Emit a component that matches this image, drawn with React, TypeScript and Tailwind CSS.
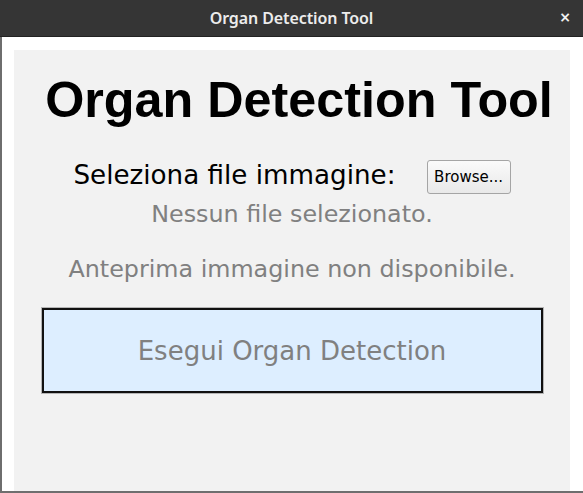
import React from "react";

export default function App() {
  return (
    <div className="w-[583px] h-[493px] bg-white flex flex-col overflow-hidden relative">
      <div className="h-[37px] bg-[#353535] border-b border-[#222] flex items-center justify-center relative shrink-0">
        <span className="text-[#ececec] text-[16px] font-semibold tracking-[-0.1px] -mt-[1px]" style={{ fontFamily: '"Noto Sans", sans-serif' }}>
          Organ Detection Tool
        </span>
        <span className="absolute right-[12px] top-[10px] text-[#f0f0f0] text-[14px] font-bold leading-none" style={{ fontFamily: '"DejaVu Sans", sans-serif' }}>
          ×
        </span>
      </div>
      <div className="flex-1 flex border-l-2 border-b-2 border-l-[#6e6e6e] border-b-[#6e6e6e] pl-[12px] pr-[13px] pt-[13px]">
        <div className="flex-1 bg-[#f2f2f2] flex flex-col items-center" style={{ fontFamily: '"DejaVu Sans", sans-serif' }}>
          <h1 className="mt-[22px] pl-[14px] text-[50.3px] leading-[56px] font-bold text-black" style={{ fontFamily: '"Liberation Sans", Arial, sans-serif' }}>
            Organ Detection Tool
          </h1>
          <div className="mt-[32px] flex items-start gap-[31px]">
            <span className="text-[26.2px] leading-[30px] text-black">Seleziona file immagine:</span>
            <button className="h-[34px] w-[84px] border border-[#a5a5a5] rounded-[3px] bg-gradient-to-b from-[#fafafa] to-[#e9e9e9] text-[15px] text-black">
              Browse...
            </button>
          </div>
          <div className="mt-[6px] text-[23.8px] leading-[28px] text-[#808080]">Nessun file selezionato.</div>
          <div className="mt-[27px] text-[23.8px] leading-[28px] text-[#808080]">Anteprima immagine non disponibile.</div>
          <div className="mt-[25px] w-[501px] h-[85px] bg-[#ddeeff] border-2 border-[#111] shadow-[0_0_0_1px_#b5b5b5] flex items-center justify-center">
            <span className="text-[26px] leading-[30px] text-[#808080]">Esegui Organ Detection</span>
          </div>
        </div>
      </div>
    </div>
  );
}
